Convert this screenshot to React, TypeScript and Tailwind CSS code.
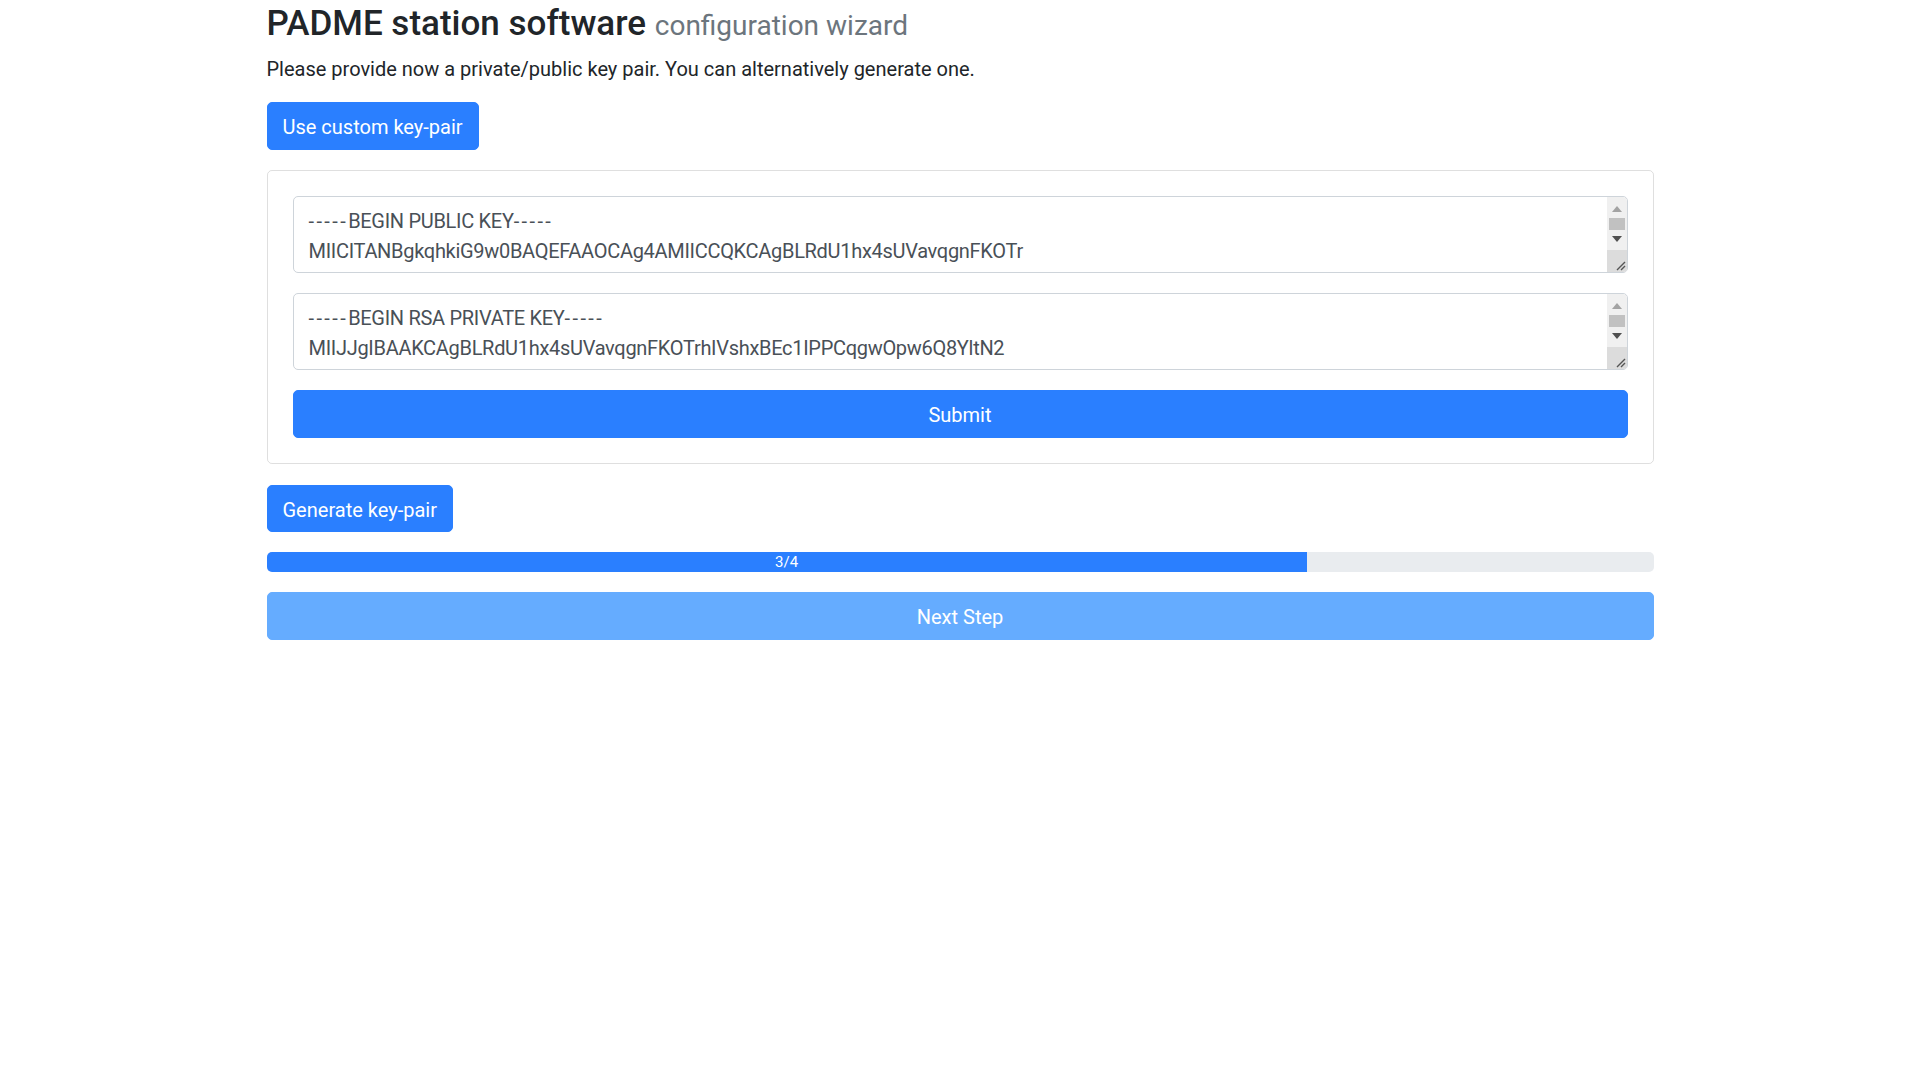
import React from "react";

const PUBLIC_KEY = {
  header: "BEGIN PUBLIC KEY",
  body: "MIICITANBgkqhkiG9w0BAQEFAAOCAg4AMIICCQKCAgBLRdU1hx4sUVavqgnFKOTr",
};

const PRIVATE_KEY = {
  header: "BEGIN RSA PRIVATE KEY",
  body: "MIIJJgIBAAKCAgBLRdU1hx4sUVavqgnFKOTrhIVshxBEc1IPPCqgwOpw6Q8YltN2",
};

function Dashes() {
  return <span className="tracking-[2.4px]">-----</span>;
}

function Scrollbar() {
  return (
    <div className="flex w-[20px] shrink-0 flex-col rounded-tr-[4px] bg-[#f0f0f0]">
      <div className="flex h-[20px] items-center justify-center pt-[3px]">
        <svg width="10" height="6" viewBox="0 0 10 6">
          <path d="M0 6 L5 0 L10 6 Z" fill="#a3a3a3" />
        </svg>
      </div>
      <div className="mx-[2px] mt-[1px] h-[12px] bg-[#c1c1c1]" />
      <div className="flex h-[18px] items-center justify-center">
        <svg width="10" height="6" viewBox="0 0 10 6">
          <path d="M0 0 L10 0 L5 6 Z" fill="#505050" />
        </svg>
      </div>
      <div className="flex-1" />
      <div className="flex h-[22px] items-end justify-end bg-[#dcdcdc] pb-[1px] pr-[1px]">
        <svg width="12" height="12" viewBox="0 0 12 12">
          <path d="M11 3 L3 11 M11 7 L7 11" stroke="#555" strokeWidth="1.4" />
        </svg>
      </div>
    </div>
  );
}

function KeyField({ header, body }: { header: string; body: string }) {
  return (
    <div className="flex h-[77px] overflow-hidden rounded-[5px] border border-[#ced4da] bg-white">
      <div className="min-w-0 flex-1 overflow-hidden px-[15px] pt-[9px] pb-[6px] text-[20px] leading-[30px] tracking-[-0.3px] whitespace-pre text-[#495057]">
        <div>
          <Dashes />
          {header}
          <Dashes />
        </div>
        <div>{body}</div>
      </div>
      <Scrollbar />
    </div>
  );
}

const btn = "h-[47.5px] rounded-[5px] border pt-[9px] pb-[6px] leading-[30px] text-white";

export default function App() {
  return (
    <div className="min-h-screen bg-white font-['Roboto',sans-serif] text-[20px] leading-[30px] text-[#212529]">
      <div className="mx-auto w-[1387px]">
        <h3 className="mb-[7.5px] pt-[2.5px] text-[35px] leading-[42px] font-medium">
          PADME station software{" "}
          <small className="text-[28px] leading-[33.6px] font-normal text-[#6c757d]">configuration wizard</small>
        </h3>
        <p className="mb-[18.5px] pt-[1.5px]">
          Please provide now a private/public key pair. You can alternatively generate one.
        </p>

        <button className={`${btn} border-[#2a7fff] bg-[#2a7fff] px-[15px]`}>Use custom key-pair</button>

        <div className="mt-[20.5px] rounded-[5px] border border-[rgba(0,0,0,0.125)] p-[25px]">
          <KeyField {...PUBLIC_KEY} />
          <div className="mt-[20px]">
            <KeyField {...PRIVATE_KEY} />
          </div>
          <button className={`${btn} mt-[20px] block w-full border-[#2a7fff] bg-[#2a7fff]`}>Submit</button>
        </div>

        <button className={`${btn} mt-[21px] border-[#2a7fff] bg-[#2a7fff] px-[15px]`}>Generate key-pair</button>

        <div className="mt-[20px] flex h-[20px] overflow-hidden rounded-[5px] bg-[#e9ecef] text-[15px] leading-[20px]">
          <div className="flex items-center justify-center bg-[#2a7fff] text-white" style={{ width: "75%" }}>
            3/4
          </div>
        </div>

        <button className={`${btn} mt-[20px] block w-full cursor-default border-[#65acff] bg-[#65acff]`}>
          Next Step
        </button>
      </div>
    </div>
  );
}
